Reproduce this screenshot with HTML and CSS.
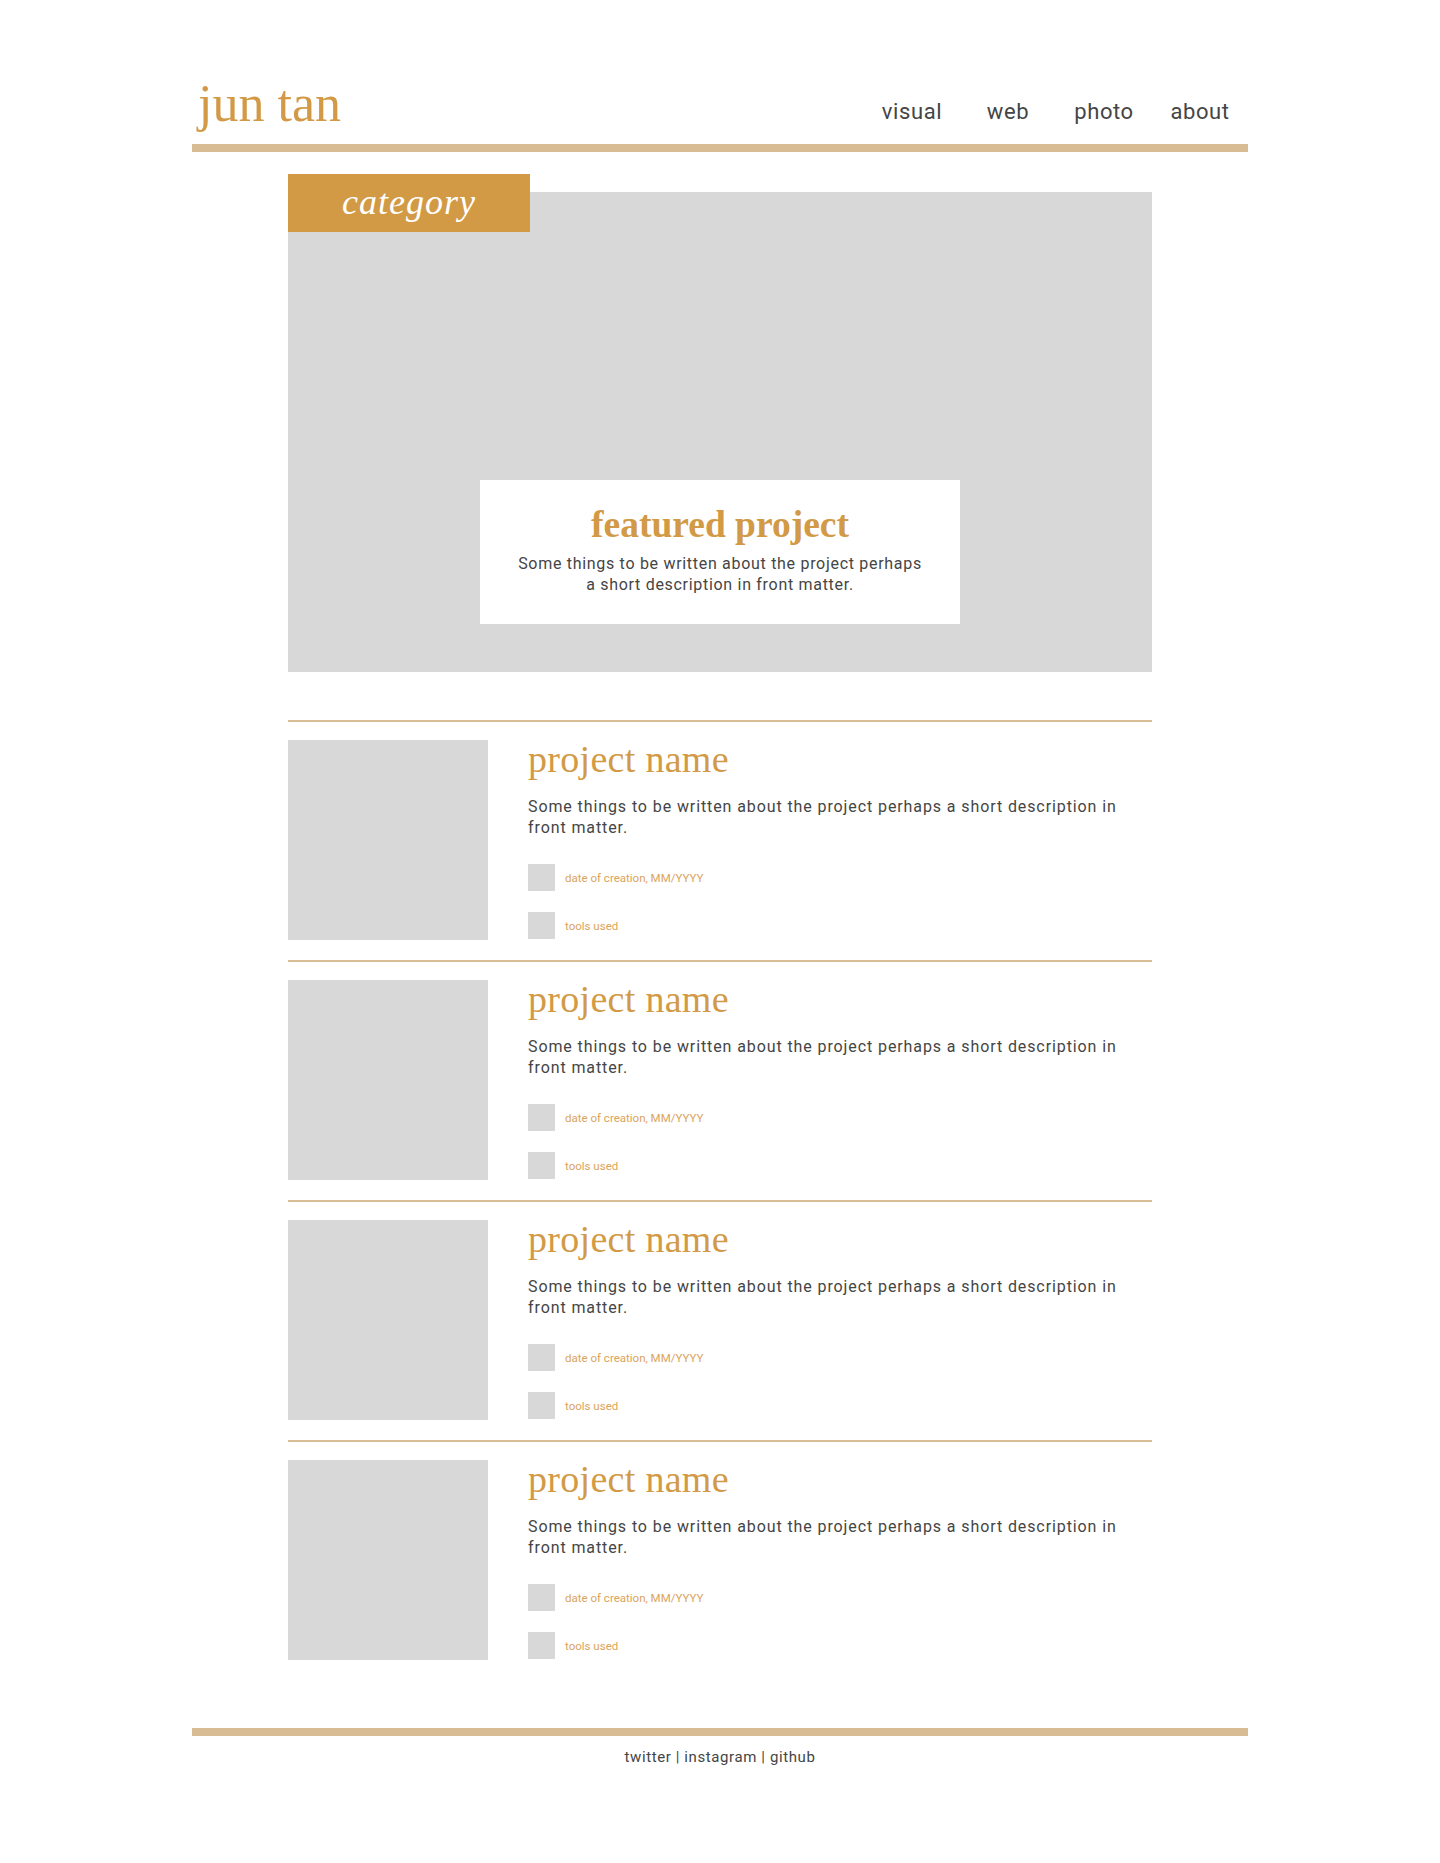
FILE: index.html
```html
<!DOCTYPE html>
<html lang="en">
<head>
<meta charset="utf-8">
<title>jun tan</title>
<link rel="stylesheet" href="styles.css">
</head>
<body>
<div class="page">
  <header class="site-header">
    <a class="logo" href="#">jun tan</a>
    <nav class="nav">
      <a href="#">visual</a>
      <a href="#">web</a>
      <a href="#">photo</a>
      <a href="#">about</a>
    </nav>
  </header>

  <main class="content">
    <section class="featured">
      <div class="badge">category</div>
      <div class="feature-card">
        <h2 class="feature-title">featured project</h2>
        <p class="feature-desc">Some things to be written about the project perhaps<br>a short description in front matter.</p>
      </div>
    </section>

    <ul class="projects">
      <li class="project">
        <div class="thumb"></div>
        <div class="project-body">
          <h3 class="project-title">project name</h3>
          <p class="project-desc">Some things to be written about the project perhaps a short description in front matter.</p>
          <ul class="meta">
            <li><span class="meta-icon"></span>date of creation, MM/YYYY</li>
            <li><span class="meta-icon"></span>tools used</li>
          </ul>
        </div>
      </li>
      <li class="project">
        <div class="thumb"></div>
        <div class="project-body">
          <h3 class="project-title">project name</h3>
          <p class="project-desc">Some things to be written about the project perhaps a short description in front matter.</p>
          <ul class="meta">
            <li><span class="meta-icon"></span>date of creation, MM/YYYY</li>
            <li><span class="meta-icon"></span>tools used</li>
          </ul>
        </div>
      </li>
      <li class="project">
        <div class="thumb"></div>
        <div class="project-body">
          <h3 class="project-title">project name</h3>
          <p class="project-desc">Some things to be written about the project perhaps a short description in front matter.</p>
          <ul class="meta">
            <li><span class="meta-icon"></span>date of creation, MM/YYYY</li>
            <li><span class="meta-icon"></span>tools used</li>
          </ul>
        </div>
      </li>
      <li class="project">
        <div class="thumb"></div>
        <div class="project-body">
          <h3 class="project-title">project name</h3>
          <p class="project-desc">Some things to be written about the project perhaps a short description in front matter.</p>
          <ul class="meta">
            <li><span class="meta-icon"></span>date of creation, MM/YYYY</li>
            <li><span class="meta-icon"></span>tools used</li>
          </ul>
        </div>
      </li>
    </ul>
  </main>

  <footer class="site-footer">
    <a href="#">twitter</a> | <a href="#">instagram</a> | <a href="#">github</a>
  </footer>
</div>
</body>
</html>
```

FILE: styles.css
```css
html, body {
  margin: 0;
  padding: 0;
  background: #ffffff;
}

body {
  font-family: Roboto, "Liberation Sans", sans-serif;
  color: #454545;
}

a {
  color: inherit;
  text-decoration: none;
}

.page {
  width: 1056px;
  margin: 0 auto;
}

/* Header */
.site-header {
  display: flex;
  justify-content: space-between;
  align-items: flex-end;
  padding-top: 78px;
  padding-bottom: 14px;
  border-bottom: 8px solid #d7bc94;
}

.logo {
  font-family: "Liberation Serif", serif;
  font-size: 52px;
  line-height: 52px;
  color: #d29a46;
  padding-left: 6px;
}

.nav {
  display: flex;
  padding-bottom: 7px;
}

.nav a {
  width: 96px;
  text-align: center;
  font-size: 22px;
  line-height: 22px;
  letter-spacing: 0.6px;
  color: #454545;
}

/* Content */
.content {
  padding: 0 96px;
}

.featured {
  position: relative;
  margin-top: 40px;
  height: 480px;
  background: #d8d8d8;
  display: flex;
  justify-content: center;
  align-items: flex-end;
  padding-bottom: 48px;
  box-sizing: border-box;
}

.badge {
  position: absolute;
  top: -18px;
  left: 0;
  width: 242px;
  height: 58px;
  background: #d29a45;
  color: #ffffff;
  font-family: "Liberation Serif", serif;
  font-style: italic;
  font-size: 36px;
  line-height: 57px;
  letter-spacing: 1px;
  text-align: center;
}

.feature-card {
  width: 480px;
  height: 144px;
  background: #ffffff;
  text-align: center;
  padding-top: 27px;
  box-sizing: border-box;
}

.feature-title {
  margin: 0;
  font-family: "Liberation Serif", serif;
  font-weight: bold;
  font-size: 37.5px;
  line-height: 36px;
  color: #d29a46;
}

.feature-desc {
  margin: 10px 0 0;
  font-size: 16px;
  line-height: 21px;
  letter-spacing: 0.7px;
  color: #454545;
}

/* Projects */
.projects {
  list-style: none;
  margin: 48px 0 0;
  padding: 0;
}

.project {
  display: flex;
  gap: 40px;
  border-top: 2px solid #d7bc94;
  padding: 18px 0 20px;
}

.thumb {
  flex: none;
  width: 200px;
  height: 200px;
  background: #d8d8d8;
}

.project-body {
  flex: 1;
}

.project-title {
  margin: 1px 0 0;
  font-family: "Liberation Serif", serif;
  font-weight: normal;
  font-size: 38px;
  line-height: 37px;
  letter-spacing: 0.3px;
  color: #d29a46;
}

.project-desc {
  margin: 18px 0 0;
  max-width: 610px;
  font-size: 16px;
  line-height: 21px;
  letter-spacing: 0.9px;
  color: #454545;
}

.meta {
  list-style: none;
  margin: 26px 0 0;
  padding: 0;
  display: flex;
  flex-direction: column;
  gap: 21px;
}

.meta li {
  display: flex;
  align-items: center;
  gap: 10px;
  font-size: 11.5px;
  line-height: 14px;
  color: #dba45c;
}

.meta-icon {
  flex: none;
  width: 27px;
  height: 27px;
  background: #d8d8d8;
}

/* Footer */
.site-footer {
  margin-top: 48px;
  border-top: 8px solid #d7bc94;
  padding: 11px 0 96px;
  text-align: center;
  font-size: 15px;
  line-height: 20px;
  letter-spacing: 0.6px;
  color: #454545;
}
```
